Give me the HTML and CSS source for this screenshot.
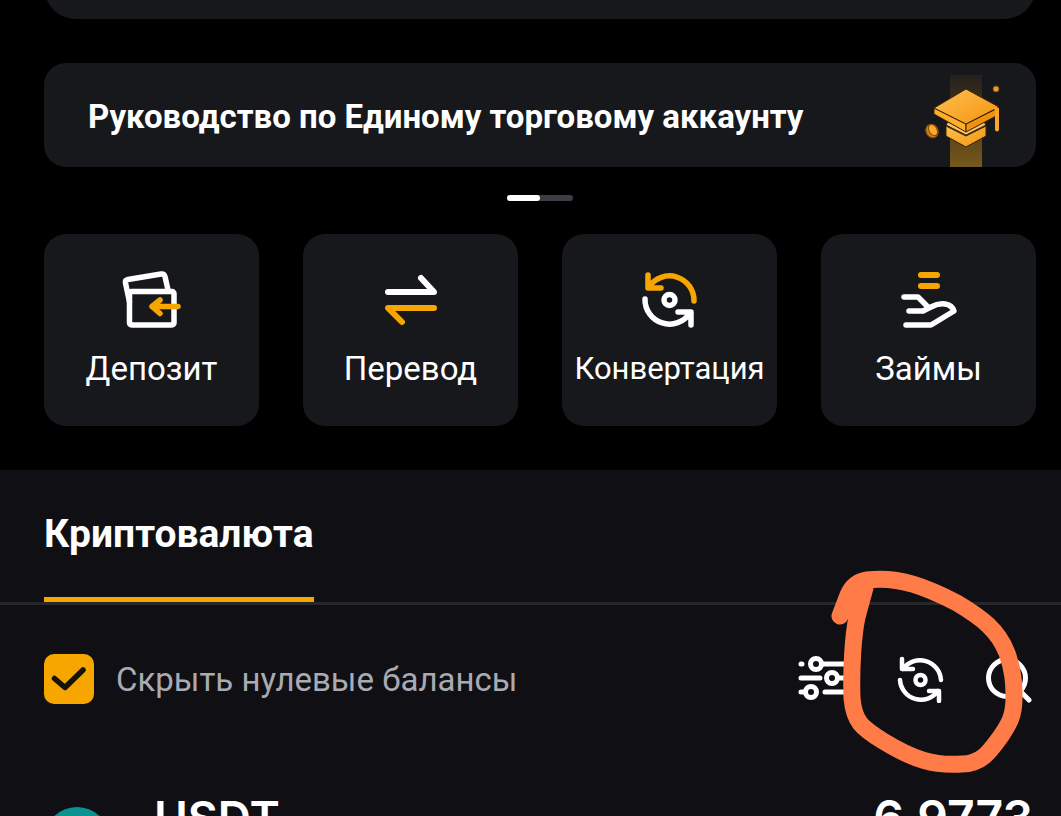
FILE: index.html
```html
<!DOCTYPE html>
<html lang="ru">
<head>
<meta charset="utf-8">
<meta name="viewport" content="width=device-width, initial-scale=1">
<title>Единый торговый аккаунт</title>
<link rel="stylesheet" href="styles.css">
</head>
<body>
<main class="page">
  <section class="overview">
    <div class="summary-card"></div>
    <a class="banner" href="#guide">
      <span class="banner-title">Руководство по Единому торговому аккаунту</span>
      <svg class="banner-art" viewBox="0 0 80 104" aria-hidden="true">
        <defs>
          <linearGradient id="beam" x1="0" y1="0" x2="0" y2="1">
            <stop offset="0" stop-color="#b87a14" stop-opacity=".08"/>
            <stop offset="1" stop-color="#a87a1c" stop-opacity=".65"/>
          </linearGradient>
          <linearGradient id="gold" x1="0" y1="0" x2="1" y2="1">
            <stop offset="0" stop-color="#ffc04d"/>
            <stop offset="1" stop-color="#f39412"/>
          </linearGradient>
        </defs>
        <rect x="30" y="12" width="32" height="92" fill="url(#beam)"/>
        <g stroke="#3a230a" stroke-width="1" stroke-linejoin="round">
          <path d="M26 63 46 73 66 63V73L46 84 26 73Z" fill="url(#gold)"/>
          <path d="M28 59 46 68 64 59 66 62 46 72 26 62Z" fill="#ffc561"/>
          <path d="M14 45 46 61V69L14 51Z" fill="#ffae2c"/>
          <path d="M46 61 78 45V52L46 69Z" fill="#ee920f"/>
          <path d="M46 26 79 44 46 61 14 45Z" fill="url(#gold)"/>
        </g>
        <path d="M74 44 79 45V67Q77 70 75 67V49" fill="#f9a52b"/>
        <g stroke="#7c4e0d">
          <ellipse cx="12" cy="68" rx="6" ry="7" transform="rotate(-30 12 68)" fill="#c8801c"/>
          <ellipse cx="13" cy="67" rx="4" ry="6" transform="rotate(-30 13 67)" fill="#ffa52b"/>
          <ellipse cx="76" cy="26" rx="3" ry="3" fill="#e99a35"/>
        </g>
      </svg>
    </a>
    <div class="pager"><span class="pager-current"></span></div>
    <nav class="actions">
      <button class="tile" type="button">
        <svg class="tile-icon" viewBox="0 0 60 60" aria-hidden="true">
          <g fill="none" stroke="#fff" stroke-width="5.500" stroke-linejoin="round" stroke-linecap="round">
            <path d="M7.500 32 3.500 13Q3 10 6 9.500L39 4Q42 3.500 43 6.500L46 20"/>
            <rect x="7.500" y="21.500" width="44.500" height="33.500" rx="2"/>
          </g>
          <path d="M56 36.500H30M38 30 30 36.500 38 43.500" fill="none" stroke="#f7a600" stroke-width="5.500" stroke-linejoin="round" stroke-linecap="round"/>
        </svg>
        <span class="tile-label">Депозит</span>
      </button>
      <button class="tile" type="button">
        <svg class="tile-icon" viewBox="0 0 60 60" aria-hidden="true">
          <g fill="none" stroke-width="6" stroke-linejoin="round" stroke-linecap="round">
            <path d="M7 22H53L40 8" stroke="#fff"/>
            <path d="M53 38H7L21 52" stroke="#f7a600"/>
          </g>
        </svg>
        <span class="tile-label">Перевод</span>
      </button>
      <button class="tile" type="button">
        <svg class="tile-icon" viewBox="0 0 60 60" aria-hidden="true">
          <g fill="none" stroke-width="5.500" stroke-linejoin="round" stroke-linecap="round">
            <path d="M54 31A24.500 24.500 0 0 0 9 17M8 5V18H21" stroke="#f7a600"/>
            <path d="M5 29A24.500 24.500 0 0 0 50 43M38 42H51V55" stroke="#fff"/>
            <circle cx="29.500" cy="30" r="5.500" stroke="#fff"/>
          </g>
        </svg>
        <span class="tile-label tile-label-compact">Конвертация</span>
      </button>
      <button class="tile" type="button">
        <svg class="tile-icon" viewBox="0 0 60 60" aria-hidden="true">
          <g fill="none" stroke-width="5.500" stroke-linejoin="round" stroke-linecap="round">
            <path d="M22 5H38M22 16H38" stroke="#f7a600" stroke-width="6"/>
            <path d="M5 27H19L30 38M10 41H24L32 37Q39 33 46 34Q53 35 55 41L32 55H7" stroke="#fff"/>
          </g>
        </svg>
        <span class="tile-label">Займы</span>
      </button>
    </nav>
  </section>

  <section class="assets">
    <div class="tabs" role="tablist">
      <button class="tab" type="button" role="tab" aria-selected="true">Криптовалюта</button>
    </div>
    <div class="toolbar">
      <label class="filter" for="hide-zero">
        <input class="filter-box" id="hide-zero" type="checkbox" checked>
        <svg class="filter-tick" viewBox="0 0 50 50" aria-hidden="true"><path d="M10.500 24.500 21 33.500 39 16" fill="none" stroke="#15120a" stroke-width="5.500" stroke-linecap="round" stroke-linejoin="round"/></svg>
        <span class="filter-text">Скрыть нулевые балансы</span>
      </label>
      <div class="tools">
        <button class="tool tool-filters" type="button" aria-label="Фильтры">
          <svg viewBox="0 0 48 48" fill="none" stroke="#fff" stroke-width="5" stroke-linecap="round">
            <path d="M3 9H4M24 9H46M3 23H22M42 23H46M3 37H7M27 37H46"/>
            <circle cx="18" cy="9" r="5.500"/><circle cx="34" cy="23" r="5.500"/><circle cx="13" cy="37" r="5.500"/>
          </svg>
        </button>
        <button class="tool" type="button" aria-label="Конвертация">
          <svg viewBox="0 0 48 48" fill="none" stroke="#fff" stroke-width="4.500" stroke-linecap="round" stroke-linejoin="round">
            <path d="M44 25A21 21 0 0 0 6 14M5 4V14H16M3 25A21 21 0 0 0 41 36M32 36H42V46"/>
            <circle cx="23.500" cy="25" r="5"/>
          </svg>
        </button>
        <button class="tool" type="button" aria-label="Поиск">
          <svg viewBox="0 0 48 48" fill="none" stroke="#fff" stroke-width="5" stroke-linecap="round">
            <circle cx="22" cy="23" r="18.500"/><path d="M36 37 44 45"/>
          </svg>
        </button>
      </div>
    </div>
    <div class="asset">
      <span class="coin"></span>
      <span class="asset-name">USDT</span>
      <span class="asset-amount">6.9773</span>
    </div>
    <svg class="marker" viewBox="0 0 196 204" aria-hidden="true">
      <path d="M10 46 18 25Q24 12 37 10C70 6 98 18 127 33C152 48 168 60 177 83C183 100 184 112 184 128C184 146 179 154 171 166C160 181 152 194 132 194C104 196 84 190 53 171C32 158 24 152 22 128C21 100 23 66 27 47L36 14" fill="none" stroke="#ff7b47" stroke-width="17" stroke-linecap="round" stroke-linejoin="round"/>
      <path d="M14 36 30 12 42 12 34 34 26 48 20 46Z" fill="#ff7b47"/>
    </svg>
  </section>
</main>
</body>
</html>
```
FILE: styles.css
```css
* { box-sizing: border-box; }

body {
  margin: 0;
  background: #000;
  color: #fff;
  font-family: Roboto, "Noto Sans", sans-serif;
}

button {
  padding: 0;
  border: 0;
  background: none;
  color: inherit;
  font: inherit;
  cursor: pointer;
}

svg { display: block; }

.page {
  display: flex;
  flex-direction: column;
  height: 100vh;
  overflow: hidden;
}

.overview {
  flex: none;
  padding: 0 25px 44px 44px;
}

.summary-card {
  height: 64px;
  margin-top: -45px;
  border-radius: 32px;
  background: #17181c;
}

.banner {
  display: flex;
  align-items: center;
  justify-content: space-between;
  height: 104px;
  margin-top: 44px;
  padding: 0 36px 0 44px;
  border-radius: 22px;
  background: #17181c;
  color: #fff;
  text-decoration: none;
}

.banner-title {
  padding-top: 4px;
  font-size: 33px;
  font-weight: 700;
  line-height: 44px;
  white-space: nowrap;
}

.banner-art {
  flex: none;
  width: 80px;
  height: 104px;
}

.pager {
  width: 66px;
  height: 6px;
  margin: 28px auto 33px;
  border-radius: 3px;
  background: #3c3e44;
}

.pager-current {
  display: block;
  width: 33px;
  height: 6px;
  border-radius: 3px;
  background: #fff;
}

.actions {
  display: grid;
  grid-template-columns: repeat(4, 1fr);
  gap: 44px;
}

.tile {
  display: flex;
  flex-direction: column;
  align-items: center;
  gap: 16px;
  min-width: 0;
  height: 192px;
  padding-top: 36px;
  border-radius: 22px;
  background: #17181c;
}

.tile-icon {
  width: 60px;
  height: 60px;
}

.tile-label {
  font-size: 33px;
  line-height: 46px;
  white-space: nowrap;
}

.tile-label-compact { font-size: 31px; }

.assets {
  position: relative;
  flex: 1 0 auto;
  background: #101014;
}

.tabs {
  height: 135px;
  padding-left: 44px;
  border-bottom: 3px solid #26272b;
}

.tab {
  height: 132px;
  padding: 0;
  border-bottom: 5px solid #f7a600;
  font-size: 39px;
  font-weight: 700;
  line-height: 52px;
}

.toolbar {
  display: flex;
  align-items: center;
  justify-content: space-between;
  padding: 49px 28px 0 44px;
}

.filter {
  position: relative;
  display: flex;
  align-items: center;
  gap: 22px;
  color: #a9abb2;
  font-size: 33px;
  line-height: 44px;
}

.filter-text { padding-top: 2px; }

.filter-box {
  appearance: none;
  width: 50px;
  height: 50px;
  margin: 0;
  border-radius: 10px;
  background: #f7a600;
}

.filter-tick {
  position: absolute;
  left: 0;
  top: 0;
  width: 50px;
  height: 50px;
  visibility: hidden;
}

.filter-box:checked + .filter-tick { visibility: visible; }

.tools {
  display: flex;
  gap: 40px;
}

.tool svg {
  width: 48px;
  height: 48px;
}

.tool-filters { margin-right: 11px; }

.asset {
  display: flex;
  align-items: flex-start;
  height: 112px;
  padding: 84px 28px 0 44px;
  overflow: hidden;
  font-family: Inter, sans-serif;
  font-size: 48px;
  font-weight: 600;
  line-height: 60px;
}

.coin {
  width: 66px;
  height: 66px;
  margin: 19px 44px 0 0;
  border-radius: 50%;
  background: #0b9391;
}

.asset-name { font-size: 46px; }

.asset-amount { margin-left: auto; }

.marker {
  position: absolute;
  top: 100px;
  right: 35px;
  width: 196px;
  height: 204px;
  pointer-events: none;
}
```
